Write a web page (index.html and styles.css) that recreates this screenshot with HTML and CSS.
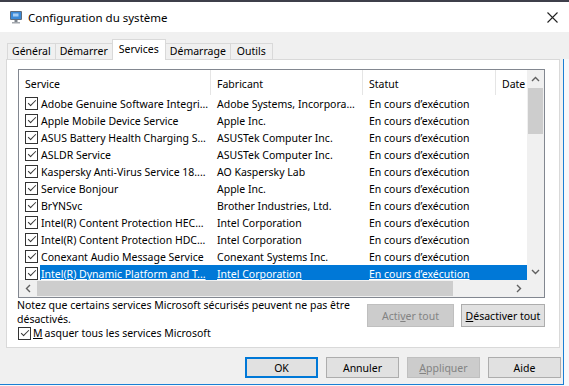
FILE: index.html
```html
<!DOCTYPE html>
<html lang="fr">
<head>
    <meta charset="UTF-8">
    <title>Configuration du système</title>
    <link rel="stylesheet" href="styles.css">
</head>
<body>
    <div class="top-strip"></div>
    <div class="titlebar">
        <svg class="app-icon" width="14" height="14" viewBox="0 0 14 14">
            <rect x="1" y="1" width="12" height="9" rx="1" fill="#5f6b7a"/>
            <rect x="2" y="2" width="10" height="7" fill="#3b8ad8"/>
            <path d="M4 3.5h5.5v3H4z" fill="#d6e9ff" opacity="0.7"/>
            <rect x="5.5" y="10" width="3" height="2" fill="#7d838b"/>
            <rect x="3" y="12" width="8" height="1.5" fill="#a3a8ae"/>
        </svg>
        <span class="title">Configuration du système</span>
        <svg class="close" width="11" height="11" viewBox="0 0 11 11">
            <path d="M0.5 0.5L10.5 10.5M10.5 0.5L0.5 10.5" stroke="#222" stroke-width="1.1"/>
        </svg>
    </div>
    <div class="tabstrip">
        <div class="tab">Général</div>
        <div class="tab">Démarrer</div>
        <div class="tab tab-active">Services</div>
        <div class="tab">Démarrage</div>
        <div class="tab">Outils</div>
    </div>
    <div class="frame">
        <div class="window">
            <div class="panel">
                <div class="listview">
                    <div class="lv-main">
                        <div class="lv-header">
                            <div class="hcell">Service</div>
                            <div class="hcell">Fabricant</div>
                            <div class="hcell">Statut</div>
                            <div class="hcell">Date</div>
                        </div>
                        <div class="lv-row">
                            <div class="check-col"><span class="check"></span></div>
                            <div class="cells"><span>Adobe Genuine Software Integri...</span><span>Adobe Systems, Incorpora...</span><span>En cours d’exécution</span><span></span></div>
                        </div>
                        <div class="lv-row">
                            <div class="check-col"><span class="check"></span></div>
                            <div class="cells"><span>Apple Mobile Device Service</span><span>Apple Inc.</span><span>En cours d’exécution</span><span></span></div>
                        </div>
                        <div class="lv-row">
                            <div class="check-col"><span class="check"></span></div>
                            <div class="cells"><span>ASUS Battery Health Charging S...</span><span>ASUSTek Computer Inc.</span><span>En cours d’exécution</span><span></span></div>
                        </div>
                        <div class="lv-row">
                            <div class="check-col"><span class="check"></span></div>
                            <div class="cells"><span>ASLDR Service</span><span>ASUSTek Computer Inc.</span><span>En cours d’exécution</span><span></span></div>
                        </div>
                        <div class="lv-row">
                            <div class="check-col"><span class="check"></span></div>
                            <div class="cells"><span>Kaspersky Anti-Virus Service 18....</span><span>AO Kaspersky Lab</span><span>En cours d’exécution</span><span></span></div>
                        </div>
                        <div class="lv-row">
                            <div class="check-col"><span class="check"></span></div>
                            <div class="cells"><span>Service Bonjour</span><span>Apple Inc.</span><span>En cours d’exécution</span><span></span></div>
                        </div>
                        <div class="lv-row">
                            <div class="check-col"><span class="check"></span></div>
                            <div class="cells"><span>BrYNSvc</span><span>Brother Industries, Ltd.</span><span>En cours d’exécution</span><span></span></div>
                        </div>
                        <div class="lv-row">
                            <div class="check-col"><span class="check"></span></div>
                            <div class="cells"><span>Intel(R) Content Protection HEC...</span><span>Intel Corporation</span><span>En cours d’exécution</span><span></span></div>
                        </div>
                        <div class="lv-row">
                            <div class="check-col"><span class="check"></span></div>
                            <div class="cells"><span>Intel(R) Content Protection HDC...</span><span>Intel Corporation</span><span>En cours d’exécution</span><span></span></div>
                        </div>
                        <div class="lv-row">
                            <div class="check-col"><span class="check"></span></div>
                            <div class="cells"><span>Conexant Audio Message Service</span><span>Conexant Systems Inc.</span><span>En cours d’exécution</span><span></span></div>
                        </div>
                        <div class="lv-row selected">
                            <div class="check-col"><span class="check"></span></div>
                            <div class="cells"><span>Intel(R) Dynamic Platform and T...</span><span>Intel Corporation</span><span>En cours d’exécution</span><span></span></div>
                        </div>
                    </div>
                    <div class="vscroll">
                        <div class="arrow">
                            <svg width="9" height="6" viewBox="0 0 9 6"><path d="M1 5L4.5 1.5L8 5" fill="none" stroke="#606060" stroke-width="1.4"/></svg>
                        </div>
                        <div class="vtrack"><div class="vthumb"></div></div>
                        <div class="arrow">
                            <svg width="9" height="6" viewBox="0 0 9 6"><path d="M1 1L4.5 4.5L8 1" fill="none" stroke="#606060" stroke-width="1.4"/></svg>
                        </div>
                    </div>
                    <div class="hscroll">
                        <div class="arrow">
                            <svg width="6" height="9" viewBox="0 0 6 9"><path d="M5 1L1.5 4.5L5 8" fill="none" stroke="#606060" stroke-width="1.4"/></svg>
                        </div>
                        <div class="htrack"><div class="hthumb"></div></div>
                        <div class="arrow">
                            <svg width="6" height="9" viewBox="0 0 6 9"><path d="M1 1L4.5 4.5L1 8" fill="none" stroke="#606060" stroke-width="1.4"/></svg>
                        </div>
                    </div>
                    <div class="corner"></div>
                </div>

                <div class="panel-foot">
                    <div class="notes">
                        <p>Notez que certains services Microsoft sécurisés peuvent ne pas être<br>désactivés.</p>
                        <label class="check-label"><span class="check"></span><u>M</u>asquer tous les services Microsoft</label>
                    </div>
                    <div class="panel-buttons">
                        <button class="btn btn-wide" disabled>Acti<u>v</u>er tout</button>
                        <button class="btn btn-wide btn-deactivate"><u>D</u>ésactiver tout</button>
                    </div>
                </div>
            </div>

            <div class="dialog-buttons">
                <button class="btn btn-default">OK</button>
                <button class="btn">Annuler</button>
                <button class="btn" disabled><u>A</u>ppliquer</button>
                <button class="btn">Aide</button>
            </div>
        </div>
        <div class="desktop-edge"></div>
    </div>
</body>
</html>
```

FILE: styles.css
```css
body {
    margin: 0;
    width: 569px;
    height: 386px;
    overflow: hidden;
    background: #f7f8fa;
    font-family: 'Noto Sans', 'Segoe UI', sans-serif;
    font-size: 10.5px;
    color: #000;
}
.top-strip {
    height: 2px;
    background: #3e3f4a;
}
.titlebar {
    height: 30px;
    background: #fff;
    display: flex;
    align-items: center;
    padding-left: 9px;
}
.app-icon {
    margin-right: 5px;
}
.title {
    flex: 1;
    font-size: 11.5px;
}
.close {
    margin-right: 11px;
}
.tabstrip {
    height: 27px;
    background: #f0f0f0;
    display: flex;
    align-items: flex-end;
    padding-left: 7px;
}
.tab {
    height: 16px;
    line-height: 15px;
    padding: 0 4px;
    border: 1px solid #d9d9d9;
    border-bottom: none;
    margin-right: -1px;
    box-sizing: border-box;
    background: #f0f0f0;
}
.tab:last-child {
    padding: 0 6px;
}
.tab-active {
    height: 21px;
    line-height: 18px;
    padding: 0 6px;
    margin-bottom: -1px;
    background: #fff;
    position: relative;
    z-index: 1;
}
.frame {
    display: flex;
}
.window {
    width: 564px;
    box-sizing: border-box;
    background: #f0f0f0;
    border-right: 1px solid #1a7fd4;
    border-bottom: 1px solid #1a7fd4;
    padding-bottom: 6px;
}
.desktop-edge {
    flex: 1;
}
.panel {
    margin-left: 6px;
    width: 554px;
    height: 289px;
    box-sizing: border-box;
    border: 1px solid #d9d9d9;
    background: #fff;
}
.listview {
    margin: 9px 0 0 11px;
    width: 527px;
    height: 229px;
    box-sizing: border-box;
    border: 1px solid #828790;
    display: grid;
    grid-template-columns: 508px 17px;
    grid-template-rows: 210px 17px;
}
.lv-main {
    overflow: hidden;
}
.lv-header {
    display: grid;
    grid-template-columns: 192px 152px 133px 1fr;
    height: 25px;
}
.hcell {
    padding: 2px 0 0 6px;
    height: 25px;
    box-sizing: border-box;
    line-height: 24px;
    border-right: 1px solid #e5e5e5;
    white-space: nowrap;
    overflow: hidden;
}
.hcell:last-child {
    border-right: none;
}
.lv-row {
    display: flex;
    height: 17px;
}
.check-col {
    width: 21px;
    display: flex;
    align-items: center;
    padding-left: 6px;
    box-sizing: border-box;
}
.cells {
    flex: 1;
    display: grid;
    grid-template-columns: 171px 152px 133px 1fr;
    line-height: 17px;
}
.cells span {
    padding: 1px 0 0 6px;
    height: 17px;
    box-sizing: border-box;
    line-height: 16px;
    white-space: nowrap;
    overflow: hidden;
}
.cells span:first-child {
    padding-left: 1px;
}
.selected .cells {
    background: #0078d7;
    color: #fff;
    text-decoration: underline;
}
.check {
    display: inline-block;
    width: 13px;
    height: 13px;
    box-sizing: border-box;
    border: 1px solid #333;
    background: #fff;
    position: relative;
    flex-shrink: 0;
}
.check::after {
    content: "";
    position: absolute;
    left: 2px;
    top: 2px;
    width: 7px;
    height: 3px;
    border-left: 1px solid #333;
    border-bottom: 1px solid #333;
    transform: rotate(-45deg);
}
.vscroll {
    background: #f0f0f0;
    display: flex;
    flex-direction: column;
}
.arrow {
    width: 17px;
    height: 17px;
    display: flex;
    align-items: center;
    justify-content: center;
    flex-shrink: 0;
}
.vtrack {
    flex: 1;
    padding: 1px 1px 0;
}
.vthumb {
    height: 46px;
    background: #cdcdcd;
}
.hscroll {
    background: #f0f0f0;
    display: flex;
}
.htrack {
    flex: 1;
    padding: 1px 0 1px 1px;
}
.hthumb {
    width: 416px;
    height: 100%;
    background: #cdcdcd;
}
.corner {
    background: #f0f0f0;
}
.panel-foot {
    display: flex;
    justify-content: space-between;
    margin: 0 14px 0 10px;
}
.notes p {
    margin: 0;
    line-height: 14px;
    white-space: nowrap;
}
.check-label {
    display: flex;
    align-items: center;
    gap: 2px;
    line-height: 14px;
    padding-left: 1px;
}
.panel-buttons {
    display: flex;
    gap: 7px;
    margin-top: 6px;
}
.btn {
    font-family: inherit;
    font-size: 10.5px;
    color: #000;
    background: #e1e1e1;
    border: 1px solid #adadad;
    width: 73px;
    height: 21px;
    padding: 0;
    box-sizing: border-box;
}
.btn:disabled {
    background: #cccccc;
    border-color: #bfbfbf;
    color: #838383;
}
.btn-wide {
    width: 87px;
    height: 23px;
}
.btn-deactivate {
    width: 84px;
}
.btn-default {
    border: 2px solid #0078d7;
}
.dialog-buttons {
    display: flex;
    justify-content: flex-end;
    gap: 8px;
    margin-top: 9px;
    padding-right: 2px;
}
```
